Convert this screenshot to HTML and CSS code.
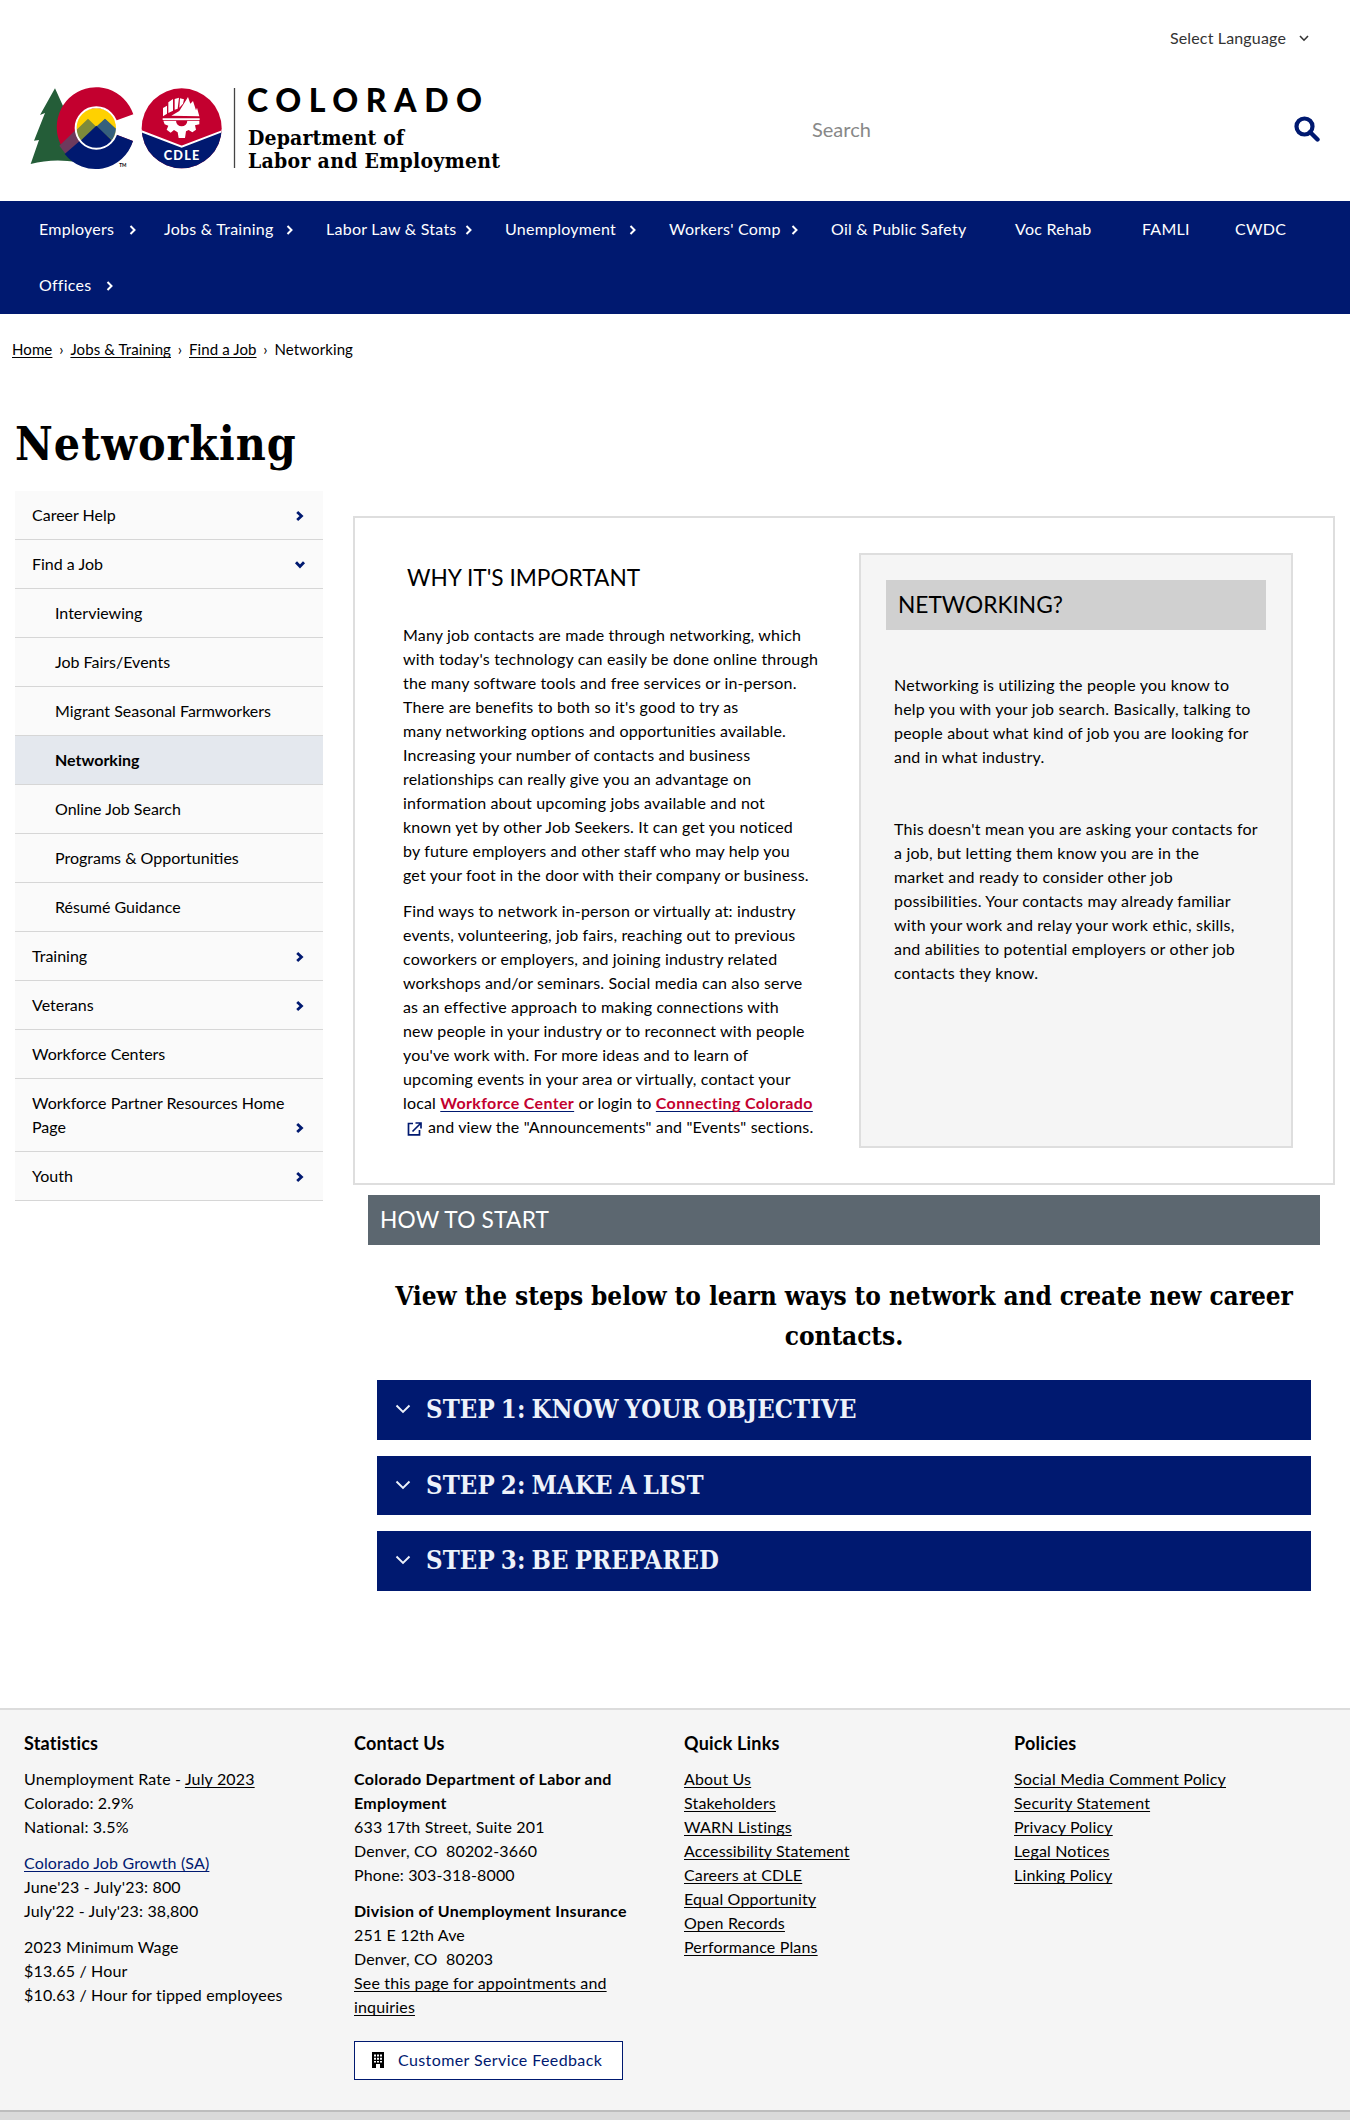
FILE: index.html
```html
<!DOCTYPE html>
<html lang="en">
<head>
<meta charset="utf-8">
<title>Networking | Department of Labor and Employment</title>
<link rel="stylesheet" href="styles.css">
</head>
<body>
<svg class="defs" width="0" height="0">
  <symbol id="chev" viewBox="0 0 10 12"><path d="M2.500 2 6.500 6 2.500 10" fill="none" stroke="currentColor" stroke-width="2"/></symbol>
  <symbol id="chev-bold" viewBox="0 0 10 12"><path d="M2.200 2 6.500 6 2.200 10" fill="none" stroke="currentColor" stroke-width="2.800"/></symbol>
  <symbol id="down" viewBox="0 0 16 10"><path d="M1.500 1.500 8 8 14.500 1.500" fill="none" stroke="currentColor" stroke-width="1.900"/></symbol>
</svg>

<header class="header">
  <div class="language">Select Language <svg class="language-arrow" width="10" height="7" viewBox="0 0 10 7"><path d="M1 1l4 4.200L9 1" fill="none" stroke="currentColor" stroke-width="1.600"/></svg></div>
  <div class="brand-row">
    <svg class="logo" width="480" height="96" viewBox="24 80 480 96" role="img" aria-label="Colorado Department of Labor and Employment">
      <g transform="translate(24 80) scale(.33333)">
        <path d="M93 25 48 105 63 99 30 182 45 180 20 252Q85 234 160 246L155 90 128 102Z" fill="#245d38"/>
        <path d="M328 103A118 120 0 1 0 327 183L272 162A58 60 0 1 1 270 124Z" fill="#c3002f"/>
        <path d="M106 197 165 140 185 190 125 222Z" fill="#6d3a5d"/>
        <path d="M122 222 175 176 217 200 272 162 327 183A118 120 0 0 1 122 222Z" fill="#001970"/>
        <circle cx="217" cy="144" r="60" fill="#ffd100"/>
        <path d="M157 150 192 116 217 140 243 116 277 148A60 60 0 0 1 157 150Z" fill="#7d8a3a"/>
        <path d="M217 140 243 116 277 148 265 180Z" fill="#35607d"/>
        <path d="M160 191 217 137 274 191 217 220Z" fill="#001970"/>
        <circle cx="217" cy="144" r="62" fill="none" stroke="#fff" stroke-width="6"/>
        <clipPath id="badge"><circle cx="473" cy="145" r="120"/></clipPath>
        <g clip-path="url(#badge)">
          <path d="M350 20H596V280H350Z" fill="#c3002f"/>
          <path d="M350 153 473 201 596 153V280H350Z" fill="#001970"/>
          <path d="M350 153 473 200 596 153" fill="none" stroke="#fff" stroke-width="6"/>
        </g>
        <g fill="#fff">
          <path d="M417 84 429 77V101L417 109ZM433 67 447 57V92L433 99ZM452 57 465 53 461 86 452 89ZM468 55 480 58 477 71 466 83ZM442 107 466 93 492 51 499 71 507 63 516 91 519 83 526 109Z"/>
          <path d="M416 115H527V120H416ZM418 122H526V133L513 136 516 149 505 157 494 150 486 154 483 174H464L461 157 450 150 440 158 428 149 433 137 422 133Z"/>
        </g>
        <path d="M456 122A17 17 0 0 0 490 122Z" fill="#c3002f"/>
        <text class="logo-cdle" x="419" y="240" textLength="107">CDLE</text>
        <text class="logo-tm" x="286" y="262">TM</text>
      </g>
      <path d="M234.500 88V168" stroke="#444" stroke-width="1.300"/>
      <text class="logo-state" x="247" y="111.500" textLength="235">COLORADO</text>
      <text class="logo-name" x="248" y="144.500" textLength="156">Department of</text>
      <text class="logo-name" x="248" y="168" textLength="252">Labor and Employment</text>
    </svg>
    <div class="search"><span>Search</span>
      <svg width="26" height="26" viewBox="0 0 26 26"><circle cx="10.500" cy="10.500" r="8" fill="none" stroke="#001970" stroke-width="4.200"/><path d="M16 16l7.500 7.500" stroke="#001970" stroke-width="4.400" stroke-linecap="round"/></svg>
    </div>
  </div>
</header>

<nav class="nav">
  <a>Employers<svg class="ico"><use href="#chev"/></svg></a>
  <a>Jobs &amp; Training<svg class="ico"><use href="#chev"/></svg></a>
  <a>Labor Law &amp; Stats<svg class="ico"><use href="#chev"/></svg></a>
  <a>Unemployment<svg class="ico"><use href="#chev"/></svg></a>
  <a>Workers' Comp<svg class="ico"><use href="#chev"/></svg></a>
  <a>Oil &amp; Public Safety</a>
  <a>Voc Rehab</a>
  <a>FAMLI</a>
  <a>CWDC</a>
  <a class="nav-short">Offices<svg class="ico"><use href="#chev"/></svg></a>
</nav>

<div class="crumbs"><u>Home</u><i>›</i><u>Jobs &amp; Training</u><i>›</i><u>Find a Job</u><i>›</i><span>Networking</span></div>

<h1>Networking</h1>

<div class="columns">
  <ul class="side">
    <li>Career Help<svg class="ico"><use href="#chev-bold"/></svg></li>
    <li>Find a Job<svg class="ico open"><use href="#chev-bold"/></svg></li>
    <li class="sub">Interviewing</li>
    <li class="sub">Job Fairs/Events</li>
    <li class="sub">Migrant Seasonal Farmworkers</li>
    <li class="sub current">Networking</li>
    <li class="sub">Online Job Search</li>
    <li class="sub">Programs &amp; Opportunities</li>
    <li class="sub">Résumé Guidance</li>
    <li>Training<svg class="ico"><use href="#chev-bold"/></svg></li>
    <li>Veterans<svg class="ico"><use href="#chev-bold"/></svg></li>
    <li>Workforce Centers</li>
    <li>Workforce Partner Resources Home<br>Page<svg class="ico"><use href="#chev-bold"/></svg></li>
    <li>Youth<svg class="ico"><use href="#chev-bold"/></svg></li>
  </ul>

  <main class="main">
    <section class="card">
      <div class="why">
        <h2>WHY IT'S IMPORTANT</h2>
        <p>Many job contacts are made through networking, which<br>with today's technology can easily be done online through<br>the many software tools and free services or in-person.<br>There are benefits to both so it's good to try as<br>many networking options and opportunities available.<br>Increasing your number of contacts and business<br>relationships can really give you an advantage on<br>information about upcoming jobs available and not<br>known yet by other Job Seekers. It can get you noticed<br>by future employers and other staff who may help you<br>get your foot in the door with their company or business.</p>
        <p>Find ways to network in-person or virtually at: industry<br>events, volunteering, job fairs, reaching out to previous<br>coworkers or employers, and joining industry related<br>workshops and/or seminars. Social media can also serve<br>as an effective approach to making connections with<br>new people in your industry or to reconnect with people<br>you've work with. For more ideas and to learn of<br>upcoming events in your area or virtually, contact your<br>local <a class="hot">Workforce Center</a> or login to <a class="hot">Connecting Colorado</a><br><svg class="external" width="15" height="14" viewBox="0 0 15 14"><path d="M6 1.500H1.500V12.800H12.500V8M8.500 1H14V6.500M13.500 1.500 5.500 9.500" fill="none" stroke="#001970" stroke-width="1.700"/></svg>and view the "Announcements" and "Events" sections.</p>
      </div>
      <aside class="panel">
        <h2>NETWORKING?</h2>
        <p>Networking is utilizing the people you know to<br>help you with your job search. Basically, talking to<br>people about what kind of job you are looking for<br>and in what industry.</p>
        <p>This doesn't mean you are asking your contacts for<br>a job, but letting them know you are in the<br>market and ready to consider other job<br>possibilities. Your contacts may already familiar<br>with your work and relay your work ethic, skills,<br>and abilities to potential employers or other job<br>contacts they know.</p>
      </aside>
    </section>
    <h2 class="bar">HOW TO START</h2>
    <h3 class="intro">View the steps below to learn ways to network and create new career<br>contacts.</h3>
    <div class="steps">
      <div class="step"><svg width="16" height="10"><use href="#down"/></svg>STEP 1: KNOW YOUR OBJECTIVE</div>
      <div class="step"><svg width="16" height="10"><use href="#down"/></svg>STEP 2: MAKE A LIST</div>
      <div class="step"><svg width="16" height="10"><use href="#down"/></svg>STEP 3: BE PREPARED</div>
    </div>
  </main>
</div>

<footer class="footer">
  <section>
    <h4>Statistics</h4>
    <p>Unemployment Rate - <u>July 2023</u><br>Colorado: 2.9%<br>National: 3.5%</p>
    <p><u class="blue">Colorado Job Growth (SA)</u><br>June'23 - July'23: 800<br>July'22 - July'23: 38,800</p>
    <p>2023 Minimum Wage<br>$13.65 / Hour<br>$10.63 / Hour for tipped employees</p>
  </section>
  <section>
    <h4>Contact Us</h4>
    <p><b>Colorado Department of Labor and<br>Employment</b><br>633 17th Street, Suite 201<br>Denver, CO&nbsp; 80202-3660<br>Phone: 303-318-8000</p>
    <p><b>Division of Unemployment Insurance</b><br>251 E 12th Ave<br>Denver, CO&nbsp; 80203<br><u>See this page for appointments and</u><br><u>inquiries</u></p>
    <a class="feedback"><svg width="12" height="16" viewBox="0 0 12 16"><path fill-rule="evenodd" d="M0 0H12V16H8V12H4V16H0ZM2 2.500V4.500H4V2.500ZM5 2.500V4.500H7V2.500ZM8 2.500V4.500H10V2.500ZM2 5.700V7.700H4V5.700ZM5 5.700V7.700H7V5.700ZM8 5.700V7.700H10V5.700ZM2 8.900V10.500H4V8.900ZM5 8.900V10.500H7V8.900ZM8 8.900V10.500H10V8.900Z"/></svg>Customer Service Feedback</a>
  </section>
  <section>
    <h4>Quick Links</h4>
    <p><u>About Us</u><br><u>Stakeholders</u><br><u>WARN Listings</u><br><u>Accessibility Statement</u><br><u>Careers at CDLE</u><br><u>Equal Opportunity</u><br><u>Open Records</u><br><u>Performance Plans</u></p>
  </section>
  <section>
    <h4>Policies</h4>
    <p><u>Social Media Comment Policy</u><br><u>Security Statement</u><br><u>Privacy Policy</u><br><u>Legal Notices</u><br><u>Linking Policy</u></p>
  </section>
</footer>
<div class="strip"></div>
</body>
</html>
```
FILE: styles.css
```css
* { box-sizing: border-box; }
body {
  margin: 0;
  width: 1350px;
  height: 2120px;
  overflow: hidden;
  display: flex;
  flex-direction: column;
  background: #fff;
  color: #000;
  font: 16px/24px Lato, "Open Sans", sans-serif;
  letter-spacing: .16px;
  white-space: nowrap;
}
h1, h2, h3, h4, p, ul { margin: 0; padding: 0; }
u, .hot { text-decoration: underline; text-underline-offset: 2px; text-decoration-skip-ink: none; }
.defs { display: none; }
.ico { width: 10px; height: 12px; flex: none; }

.header { height: 201px; padding-top: 26px; }
.language {
  display: flex;
  align-items: center;
  justify-content: flex-end;
  gap: 13px;
  padding-right: 41px;
  color: #333;
}
.brand-row { display: flex; margin: 30px 30px 0 24px; }
.search {
  display: flex;
  flex: 1;
  align-items: center;
  justify-content: space-between;
  height: 50px;
  margin: 24px 0 0 308px;
  font-size: 20px;
  letter-spacing: 0;
  color: #888;
}
.logo-cdle { font: 900 38px Lato, sans-serif; fill: #fff; letter-spacing: 0; }
.logo-tm { font: 700 14px Lato, sans-serif; letter-spacing: 0; }
.logo-state { font: 900 32px Lato, sans-serif; letter-spacing: 0; }
.logo-name { font: 700 21px "DejaVu Serif Condensed", "DejaVu Serif", serif; font-stretch: condensed; letter-spacing: 0; }

.nav {
  display: grid;
  grid-template-columns: 125px 162px 179px 164px 162px 184px 127px 93px auto;
  grid-auto-rows: 56px;
  height: 113px;
  padding-left: 39px;
  background: #001970;
  color: #fff;
  letter-spacing: .25px;
}
.nav a {
  display: flex;
  align-items: center;
  justify-content: space-between;
  padding-right: 31px;
}
.nav .ico { margin-top: 2px; }
.nav a:first-child { padding-right: 26px; }
.nav .nav-short { width: 107px; }

.crumbs {
  display: flex;
  margin: 23px 0 0 12px;
  font-size: 15px;
  letter-spacing: .1px;
}
.crumbs i { width: 18px; text-align: center; font-style: normal; }

h1 {
  margin: 53px 0 0 15px;
  font: bold 46px/60px "DejaVu Serif Condensed", "DejaVu Serif", serif;
  font-stretch: condensed;
  letter-spacing: 1px;
}

.columns { display: flex; gap: 30px; padding-left: 15px; margin-top: 17px; height: 1217px; }
.side { width: 308px; list-style: none; letter-spacing: 0; }
.side li {
  display: flex;
  align-items: flex-end;
  justify-content: space-between;
  padding: 12px 18px 12px 17px;
  border-bottom: 1px solid #d6d6d6;
  background: #fafafa;
}
.side .ico { margin-bottom: 5px; color: #001970; }
.side .open { transform: rotate(90deg); }
.side .sub { padding-left: 40px; }
.side .current { background: #e4e8ee; font-weight: bold; }

.main { width: 982px; margin-top: 25px; }
.card {
  display: grid;
  grid-template-columns: 456px 434px;
  height: 669px;
  padding: 35px 0 35px 48px;
  border: 2px solid #dedede;
}
h2 { font-size: 22.700px; font-weight: 400; line-height: 50px; letter-spacing: 0; }
.why h2 { margin: 0 0 20px 4px; }
.why p + p { margin-top: 12px; }
.hot { color: #c3002f; font-weight: bold; letter-spacing: .35px; text-decoration-color: #001970; }
.external { margin: 0 6px 0 4px; vertical-align: -3px; }
.panel {
  padding: 25px;
  border: 2px solid #dedede;
  background: #f5f5f5;
  letter-spacing: .2px;
}
.panel h2 { padding-left: 12px; background: #d0d0d0; }
.panel p { margin: 43px 0 0 8px; }
.panel p + p { margin-top: 48px; }
.bar { margin: 10px 15px 0; padding-left: 12px; background: #5c6770; color: #fff; letter-spacing: .2px; }
.intro {
  margin-top: 31px;
  text-align: center;
  font: bold 26px/40px "DejaVu Serif Condensed", "DejaVu Serif", serif;
  font-stretch: condensed;
  letter-spacing: -.08px;
}
.steps { display: grid; gap: 16px; margin: 24px 24px 0; }
.step {
  display: flex;
  align-items: center;
  gap: 15px;
  height: 59.500px;
  padding: 0 0 1px 18px;
  background: #001970;
  color: #edf2fa;
  font: bold 25.500px/40px "DejaVu Serif Condensed", "DejaVu Serif", serif;
  font-stretch: condensed;
  letter-spacing: .1px;
  word-spacing: -2px;
}

.footer {
  display: grid;
  grid-template-columns: repeat(4, 330px);
  height: 402px;
  padding: 21px 0 0 24px;
  border-top: 2px solid #dcdcdc;
  background: #f5f5f5;
}
.footer h4 { margin-bottom: 12px; font-size: 18px; line-height: 24px; letter-spacing: .2px; }
.footer p { margin-bottom: 12px; }
.footer b { letter-spacing: .3px; }
.blue { color: #001970; }
.feedback {
  display: flex;
  align-items: center;
  gap: 14px;
  width: 269px;
  height: 39px;
  margin-top: 22px;
  padding: 0 0 1px 17px;
  border: 1px solid #001970;
  background: #fff;
  color: #001970;
  letter-spacing: .4px;
}
.feedback svg { fill: #000; }
.strip { height: 10px; border-top: 2px solid #bdbdbd; background: #dadada; }
```
